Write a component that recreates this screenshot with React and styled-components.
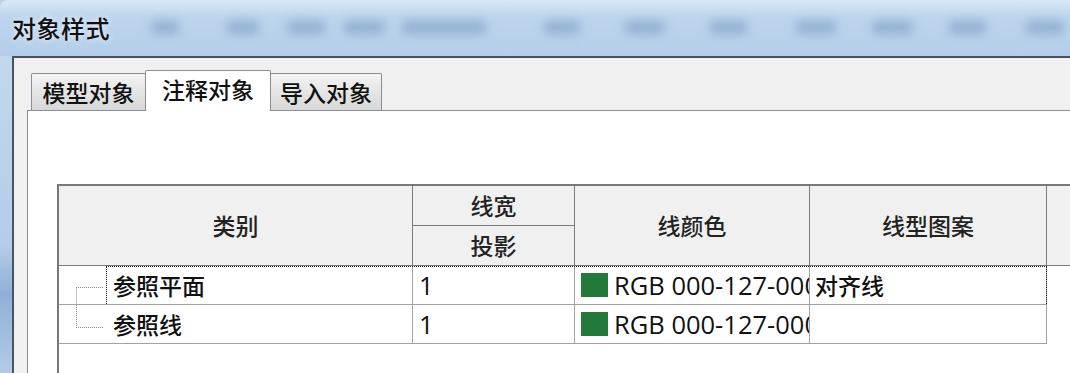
import React from "react";
import styled, { createGlobalStyle } from "styled-components";

const GlobalStyle = createGlobalStyle`
  html, body {
    margin: 0;
    padding: 0;
    background: #fff;
  }
  body {
    font-family: "Open Sans", "Noto Sans CJK SC", sans-serif;
    color: #000;
  }
`;

const COLS = "354px 162px 235px 237px 160px";

const Window = styled.div`
  width: 1070px;
  height: 373px;
  overflow: hidden;
  display: flex;
  flex-direction: column;
  background: #b9d2ec;
`;

const TitleBar = styled.div`
  height: 56px;
  flex: none;
  display: flex;
  align-items: center;
  padding: 0 0 2px 12px;
  box-sizing: border-box;
  background: linear-gradient(#dae8f6, #bdd5ee 30%, #b4cee9);
  border-top-left-radius: 8px;
  overflow: hidden;
`;

const Title = styled.div`
  font-family: "Noto Sans CJK SC", sans-serif;
  font-size: 24px;
  font-weight: 500;
  color: #111;
  letter-spacing: 0.5px;
  text-shadow: 0 0 6px rgba(255, 255, 255, 0.9);
`;

const Blurs = styled.div`
  display: flex;
  align-items: center;
  margin-left: 40px;
`;

const Blob = styled.span`
  flex: none;
  width: ${(p) => p.$w}px;
  margin-left: ${(p) => p.$gap}px;
  height: 15px;
  border-radius: 8px;
  background: #98b3d4;
  filter: blur(5px);
`;

const Body = styled.div`
  flex: 1;
  display: flex;
  min-height: 0;
`;

const SideFrame = styled.div`
  width: 12px;
  flex: none;
  background: linear-gradient(#c3d8ee, #b4cce7 60%, #8fb0d6 75%, #b3cbe6);
`;

const Client = styled.div`
  flex: 1;
  display: flex;
  flex-direction: column;
  min-width: 0;
  background: #f0f0f0;
  border-top: 2px solid #4b535d;
  border-left: 2px solid #4b535d;
  padding: 12px 0 0 13px;
`;

const TabStrip = styled.div`
  display: flex;
  align-items: flex-end;
  padding-left: 4px;
  height: 40px;
  flex: none;
`;

const Tab = styled.div`
  position: relative;
  z-index: ${(p) => (p.$active ? 2 : 1)};
  box-sizing: border-box;
  width: ${(p) => p.$w}px;
  height: ${(p) => (p.$active ? 41 : 37)}px;
  margin: 0 ${(p) => (p.$active ? -1 : 0)}px ${(p) => (p.$active ? -1 : 0)}px;
  display: flex;
  align-items: center;
  justify-content: center;
  padding-bottom: ${(p) => (p.$active ? 4 : 0)}px;
  border: 1px solid #8b8e96;
  border-bottom: none;
  border-radius: 2px 2px 0 0;
  background: ${(p) =>
    p.$active ? "#fff" : "linear-gradient(#f3f3f3, #e6e6e6 45%, #d8d8d8)"};
  font-family: "Noto Sans CJK SC", sans-serif;
  font-size: 23px;
  font-weight: 500;
  color: #111;
`;

const Panel = styled.div`
  flex: 1;
  min-height: 0;
  background: #fff;
  border-top: 1px solid #8b8e96;
  border-left: 1px solid #8b8e96;
  padding: 73px 0 0 29px;
  overflow: hidden;
`;

const Grid = styled.div`
  width: 1150px;
  height: 260px;
  border-top: 2px solid #787878;
  border-left: 2px solid #787878;
  font-family: "Noto Sans CJK SC", sans-serif;
  font-size: 23px;
  font-weight: 500;
`;

const Header = styled.div`
  display: grid;
  grid-template-columns: ${COLS};
  grid-template-rows: 40px 40px;
  background: #f0f0f0;
`;

const HeadCell = styled.div`
  box-sizing: border-box;
  grid-row: ${(p) => p.$row || "auto"};
  grid-column: ${(p) => p.$col};
  display: flex;
  align-items: center;
  justify-content: center;
  padding-bottom: 2px;
  border-right: 1px solid #7a7a7a;
  border-bottom: 1px solid #7a7a7a;
  color: #222;
`;

const Row = styled.div`
  position: relative;
  display: grid;
  grid-template-columns: ${COLS};
  height: 39px;

  &::after {
    content: "";
    display: ${(p) => (p.$focus ? "block" : "none")};
    position: absolute;
    left: 47px;
    top: 0;
    width: 941px;
    height: 38px;
    box-sizing: border-box;
    border: 1px dotted #1a1a1a;
    border-bottom: none;
    pointer-events: none;
  }
`;

const Cell = styled.div`
  box-sizing: border-box;
  display: flex;
  align-items: center;
  gap: ${(p) => p.$gap ?? 6}px;
  padding-left: ${(p) => p.$pad ?? 6}px;
  overflow: hidden;
  white-space: nowrap;
  color: #111;
  border-right: ${(p) => (p.$bare ? "none" : "1px solid #a3a3a3")};
  border-bottom: ${(p) => (p.$bare ? "none" : "1px solid #a3a3a3")};
`;

const Value = styled.span`
  font-family: "Open Sans", sans-serif;
  font-size: 25.5px;
  font-weight: 400;
  color: #111;
`;

const Swatch = styled.span`
  flex: none;
  width: 27px;
  height: 24px;
  background: #21793a;
`;

function TreeLines({ last }) {
  return (
    <svg width="47" height="38" viewBox="0 0 47 38" style={{ flex: "none" }}>
      <line
        x1="17.5"
        y1={last ? 0 : 21.5}
        x2="17.5"
        y2={last ? 22.5 : 38}
        stroke="#8c8c8c"
        strokeDasharray="1 1"
      />
      <line
        x1="17"
        y1={last ? 22.5 : 21.5}
        x2="45"
        y2={last ? 22.5 : 21.5}
        stroke="#8c8c8c"
        strokeDasharray="1 1"
      />
    </svg>
  );
}

const blobs = [
  [0, 30], [46, 34], [26, 40], [17, 43], [15, 86], [56, 38], [43, 42],
  [43, 39], [47, 42], [34, 43], [34, 39], [38, 40],
];

const rows = [
  { name: "参照平面", width: "1", color: "RGB 000-127-000", pattern: "对齐线" },
  { name: "参照线", width: "1", color: "RGB 000-127-000", pattern: "" },
];

export default function App() {
  return (
    <>
      <GlobalStyle />
      <Window>
        <TitleBar>
          <Title>对象样式</Title>
          <Blurs>
            {blobs.map(([gap, w], i) => (
              <Blob key={i} $gap={gap} $w={w} />
            ))}
          </Blurs>
        </TitleBar>
        <Body>
          <SideFrame />
          <Client>
            <TabStrip>
              <Tab $w={115}>模型对象</Tab>
              <Tab $w={126} $active>
                注释对象
              </Tab>
              <Tab $w={112}>导入对象</Tab>
            </TabStrip>
            <Panel>
              <Grid>
                <Header>
                  <HeadCell $row="1 / 3" $col="1">类别</HeadCell>
                  <HeadCell $row="1" $col="2">线宽</HeadCell>
                  <HeadCell $row="2" $col="2">投影</HeadCell>
                  <HeadCell $row="1 / 3" $col="3">线颜色</HeadCell>
                  <HeadCell $row="1 / 3" $col="4">线型图案</HeadCell>
                  <HeadCell $row="1 / 3" $col="5" />
                </Header>
                {rows.map((r, i) => (
                  <Row key={r.name} $focus={i === 0}>
                    <Cell $pad={0} $gap={7}>
                      <TreeLines last={i === rows.length - 1} />
                      {r.name}
                    </Cell>
                    <Cell>
                      <Value>{r.width}</Value>
                    </Cell>
                    <Cell>
                      <Swatch />
                      <Value>{r.color}</Value>
                    </Cell>
                    <Cell $pad={5}>{r.pattern}</Cell>
                    <Cell $bare />
                  </Row>
                ))}
              </Grid>
            </Panel>
          </Client>
        </Body>
      </Window>
    </>
  );
}
